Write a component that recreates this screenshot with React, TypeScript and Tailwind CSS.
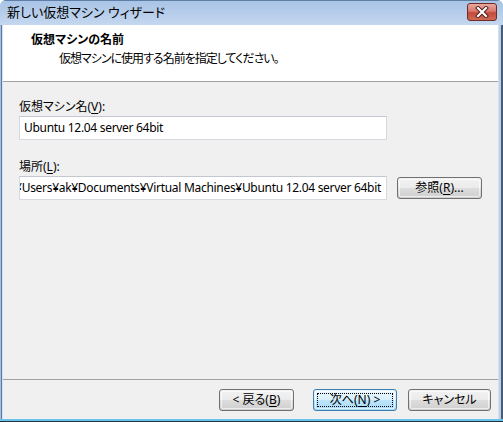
import React from "react";

// ── Bits ─────────────────────────────────────────────────────────────────────

const font = "font-['Noto_Sans','Noto_Sans_CJK_JP',sans-serif] [font-feature-settings:'palt']";

function Key({ children }: { children: React.ReactNode }) {
  return <span className="underline underline-offset-2">{children}</span>;
}

function Button({
  children,
  width,
  primary,
}: {
  children: React.ReactNode;
  width: string;
  primary?: boolean;
}) {
  const skin = primary
    ? "border-[#3c7fb1] bg-[linear-gradient(to_bottom,#eaf6fd_0%,#d9f0fc_50%,#bee6fd_50%,#a7d9f5_100%)]"
    : "border-[#707070] bg-[linear-gradient(to_bottom,#f2f2f2_0%,#ebebeb_50%,#dddddd_50%,#cfcfcf_100%)]";
  return (
    <div className={`${width} h-[22px] shrink-0 rounded-[3px] border ${skin} p-px`}>
      <div className="h-full rounded-[2px] border border-white/60 p-px">
        <div
          className={`h-full flex items-center justify-center text-[12px] leading-none text-black ${
            primary ? "outline outline-1 outline-dotted outline-black -outline-offset-1" : ""
          }`}
        >
          {children}
        </div>
      </div>
    </div>
  );
}

function TextBox({ children, alignEnd }: { children: React.ReactNode; alignEnd?: boolean }) {
  return (
    <div
      className={`w-[368px] h-[24px] shrink-0 bg-white border border-[#d5dae0] border-t-[#c3c8d0] flex items-center overflow-hidden ${
        alignEnd ? "justify-end pr-[5px]" : "pl-[4px]"
      }`}
    >
      <span className="whitespace-nowrap text-[12px] leading-none tracking-[-0.3px] text-black">{children}</span>
    </div>
  );
}

// ── Main ─────────────────────────────────────────────────────────────────────

export default function App() {
  return (
    <div className={`w-[503px] h-[422px] flex flex-col overflow-hidden rounded-t-[6px] bg-[#b9d1ea] ${font}`}>
      {/* Title bar */}
      <div className="h-[25px] shrink-0 flex items-center pl-[7px] pr-[6px] border-t border-[#5e7fa6] bg-[linear-gradient(to_bottom,#a9c4e6_0%,#b6cdea_50%,#c4d7ef_100%)]">
        <span className="flex-1 text-[13px] text-black">新しい仮想マシン ウィザード</span>
        <div className="w-[30px] h-[18px] -mt-[2px] rounded-[3px] border border-[#6e2a25] bg-[linear-gradient(to_bottom,#e8a99f_0%,#d9786c_45%,#c4493b_55%,#d06a57_100%)] flex items-center justify-center">
          <svg width="14" height="12" viewBox="0 0 14 12">
            <path d="M3 2 L11 10 M11 2 L3 10" stroke="#4a1a16" strokeWidth="4" strokeLinecap="square" />
            <path d="M3 2 L11 10 M11 2 L3 10" stroke="#ffffff" strokeWidth="2.2" strokeLinecap="square" />
          </svg>
        </div>
      </div>

      <div className="flex-1 flex min-h-0">
        {/* Left frame */}
        <div className="w-[3px] shrink-0 flex">
          <div className="w-[1px] bg-[#a6c0df]" />
          <div className="w-[1px] bg-[#5b7aa0]" />
          <div className="w-[1px] bg-[#d3e2f3]" />
        </div>

        {/* Client area */}
        <div className="w-[495px] shrink-0 flex flex-col">
          {/* Header */}
          <div className="h-[56px] shrink-0 bg-white pt-[7px] flex flex-col gap-[3px]">
            <div className="pl-[28px] text-[12px] leading-[16px] font-bold text-black">仮想マシンの名前</div>
            <div className="pl-[56px] text-[12px] leading-[16px] tracking-[-1px] text-black">
              仮想マシンに使用する名前を指定してください。
            </div>
          </div>
          <div className="h-px shrink-0 bg-[#a0a0a0]" />

          {/* Body */}
          <div className="flex-1 bg-[#f0f0f0] pl-[16px] pt-[17px] flex flex-col">
            <div className="text-[12px] leading-[16px] text-black">
              仮想マシン名(<Key>V</Key>):
            </div>
            <div className="mt-px">
              <TextBox>Ubuntu 12.04 server 64bit</TextBox>
            </div>

            <div className="mt-[19px] text-[12px] leading-[16px] text-black">
              場所(<Key>L</Key>):
            </div>
            <div className="mt-px flex items-center gap-[10px]">
              <TextBox alignEnd>C:¥Users¥ak¥Documents¥Virtual Machines¥Ubuntu 12.04 server 64bit</TextBox>
              <Button width="w-[85px]">
                参照(<Key>R</Key>)...
              </Button>
            </div>
          </div>
          <div className="h-px shrink-0 bg-[#a0a0a0]" />

          {/* Footer */}
          <div className="h-[39px] shrink-0 bg-[#f0f0f0] flex items-start justify-end pt-[9px] pr-[7px]">
            <Button width="w-[75px]">
              &lt; 戻る(<Key>B</Key>)
            </Button>
            <div className="w-[19px] shrink-0" />
            <Button width="w-[84px]" primary>
              次へ(<Key>N</Key>) &gt;
            </Button>
            <div className="w-[11px] shrink-0" />
            <Button width="w-[83px]">キャンセル</Button>
          </div>
        </div>

        {/* Right frame */}
        <div className="flex-1 flex">
          <div className="w-[1px] bg-[#d3e2f3]" />
          <div className="w-[2px] bg-[#b9d1ea]" />
          <div className="flex-1 bg-[#4a5c72]" />
        </div>
      </div>

      {/* Bottom frame */}
      <div className="h-[3px] shrink-0 flex flex-col">
        <div className="h-[2px] bg-[#6cc3ea]" />
        <div className="h-px bg-[#1f3347]" />
      </div>
    </div>
  );
}
